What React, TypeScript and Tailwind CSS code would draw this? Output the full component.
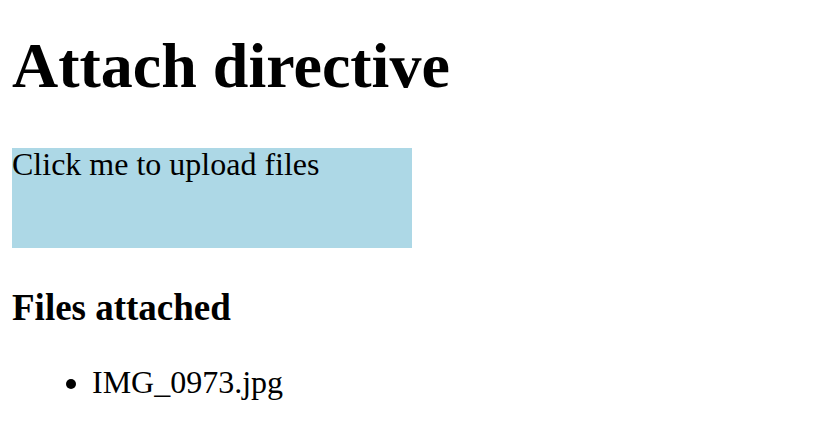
export default function App() {
  const files = ["IMG_0973.jpg"]

  return (
    <div className="min-h-[424px] bg-white px-[12px] pt-[29px] font-['Liberation_Serif',serif] text-black">
      <h1 className="mb-[45px] text-[64px] font-bold leading-[74px]">Attach directive</h1>
      <div className="h-[100px] w-[400px] cursor-pointer bg-[#add8e6] text-[32px] leading-[32px]">
        Click me to upload files
      </div>
      <h3 className="mt-[38px] text-[37px] font-bold leading-[43px]">Files attached</h3>
      <ul className="mt-[35px] list-disc pl-[80px] text-[32px] leading-[37px]">
        {files.map((file, index) => (
          <li key={index}>{file}</li>
        ))}
      </ul>
    </div>
  )
}
